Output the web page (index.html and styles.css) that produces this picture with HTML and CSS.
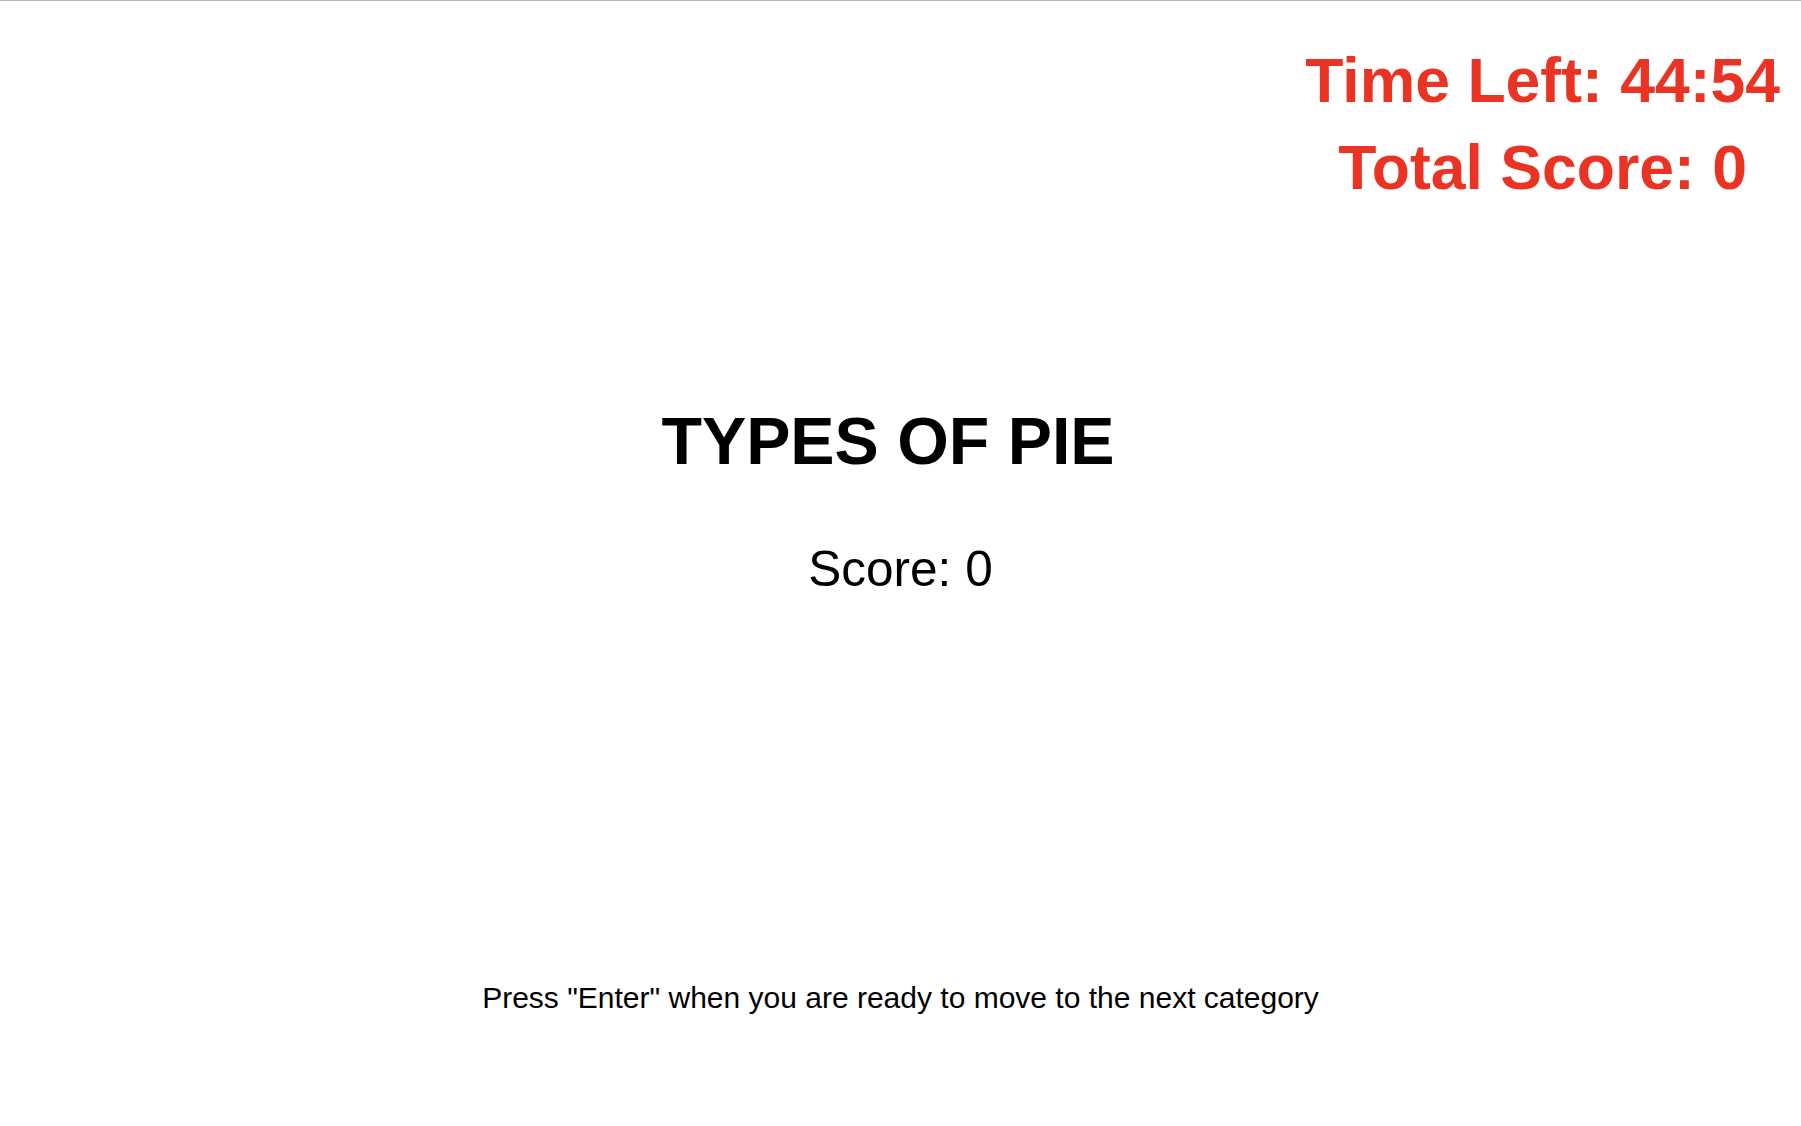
FILE: index.html
```html
<!DOCTYPE html>
<html lang="en">
<head>
<meta charset="utf-8">
<title>Types of Pie</title>
<link rel="stylesheet" href="styles.css">
</head>
<body>
  <div class="page">
    <header class="status">
      <div class="status-box">
        <div class="status-line">Time Left: 44:54</div>
        <div class="status-line">Total Score: 0</div>
      </div>
    </header>
    <main class="category">
      <h1 class="category-title">TYPES OF PIE</h1>
      <p class="category-score">Score: 0</p>
    </main>
    <footer class="hint">Press "Enter" when you are ready to move to the next category</footer>
  </div>
</body>
</html>
```

FILE: styles.css
```css
html, body {
  margin: 0;
  padding: 0;
  background: #ffffff;
}

body {
  font-family: "Liberation Sans", Arial, Helvetica, sans-serif;
  color: #000000;
}

.page {
  border-top: 1px solid #b3b3b3;
  min-height: 1125px;
  display: flex;
  flex-direction: column;
}

.status {
  display: flex;
  justify-content: flex-end;
  padding-top: 36px;
  padding-right: 21px;
}

.status-box {
  text-align: center;
  color: #ea3323;
  font-weight: bold;
  font-size: 62.5px;
  line-height: 87px;
}

.category {
  margin-top: 192px;
  display: flex;
  flex-direction: column;
  align-items: center;
}

.category-title {
  margin: 0;
  padding-right: 25px;
  font-size: 66.3px;
  line-height: 77px;
  font-weight: bold;
}

.category-score {
  margin: 61px 0 0;
  font-size: 49.5px;
  line-height: 56px;
}

.hint {
  margin-top: 383px;
  text-align: center;
  font-size: 30px;
  line-height: 35px;
}
```
